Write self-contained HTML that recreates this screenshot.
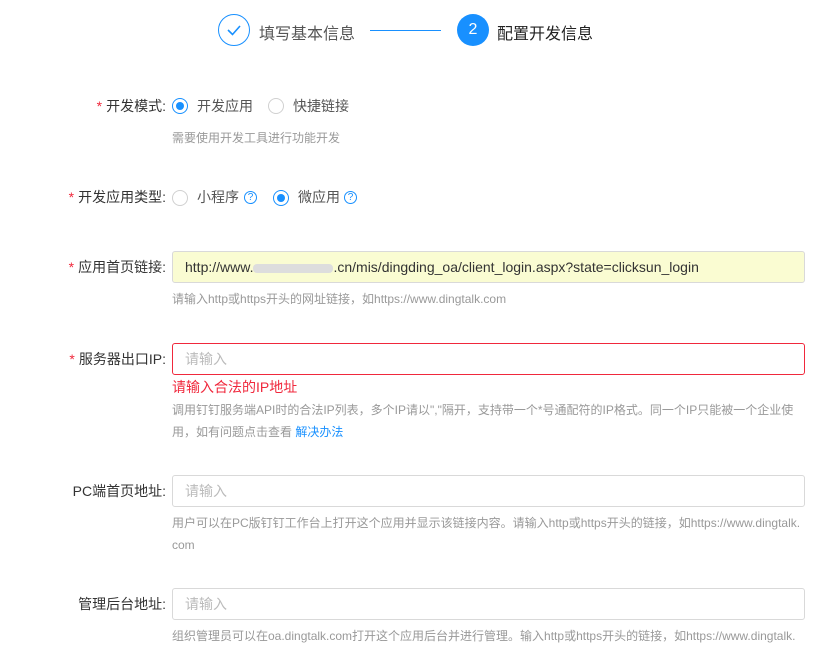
<!DOCTYPE html>
<html><head><meta charset="utf-8"><style>
*{margin:0;padding:0;box-sizing:border-box}
body{width:834px;height:648px;background:#fff;font-family:"Liberation Sans","Noto Sans CJK SC",sans-serif;color:#333;position:relative;overflow:hidden;font-size:14px}
.a{position:absolute;white-space:nowrap}
.lab{position:absolute;right:668px;font-size:14px;color:#333;white-space:nowrap;line-height:20px}
.lab b{color:#f0283c;font-weight:normal;margin-right:4px}
.inp{position:absolute;left:172px;width:633px;height:32px;border:1px solid #d9d9d9;border-radius:3px;padding-left:12px;line-height:30px;font-size:14px;color:#bbb}
.help{position:absolute;left:172px;font-size:12px;color:#999;line-height:22px;width:636px;word-break:break-all}
.r{position:absolute;width:16px;height:16px;border:1px solid #d0d0d0;border-radius:50%}
.r.on{border-color:#1890ff}
.r.on:after{content:"";position:absolute;left:3px;top:3px;width:8px;height:8px;border-radius:50%;background:#1890ff}
.q{position:absolute;width:13px;height:13px;border:1.2px solid #1890ff;border-radius:50%;color:#1890ff;font-size:10px;line-height:11px;text-align:center}
</style></head><body>
<div class="a" style="left:218px;top:14px;width:32px;height:32px;border:1px solid #1890ff;border-radius:50%"></div>
<svg class="a" style="left:218px;top:14px" width="32" height="32"><path d="M10 16 L14.5 20.5 L22 12" fill="none" stroke="#1890ff" stroke-width="1.6"/></svg>
<div class="a" style="left:259px;top:20px;font-size:16px;color:#555">填写基本信息</div>
<div class="a" style="left:370px;top:30px;width:71px;height:1px;background:#1890ff"></div>
<div class="a" style="left:457px;top:14px;width:32px;height:32px;border-radius:50%;background:#1890ff;color:#fff;text-align:center;line-height:32px;font-size:16px">2</div>
<div class="a" style="left:497px;top:20px;font-size:16px;color:#222">配置开发信息</div>

<div class="lab" style="top:96px"><b>*</b>开发模式:</div>
<div class="r on" style="left:172px;top:98px"></div><div class="a" style="left:197px;top:96px;line-height:20px;color:#555">开发应用</div>
<div class="r" style="left:268px;top:98px"></div><div class="a" style="left:293px;top:96px;line-height:20px;color:#555">快捷链接</div>
<div class="help" style="top:127px">需要使用开发工具进行功能开发</div>

<div class="lab" style="top:187px"><b>*</b>开发应用类型:</div>
<div class="r" style="left:172px;top:190px"></div><div class="a" style="left:197px;top:187px;line-height:20px;color:#555">小程序</div>
<div class="q" style="left:244px;top:191px">?</div>
<div class="r on" style="left:273px;top:190px"></div><div class="a" style="left:298px;top:187px;line-height:20px;color:#555">微应用</div>
<div class="q" style="left:344px;top:191px">?</div>

<div class="lab" style="top:257px"><b>*</b>应用首页链接:</div>
<div class="inp" style="top:251px;background:#fafcd2;color:#333">http://www.<span style="display:inline-block;width:80px;height:9px;background:#ddd;border-radius:4px;vertical-align:middle"></span>.cn/mis/dingding_oa/client_login.aspx?state=clicksun_login</div>
<div class="help" style="top:288px">请输入http或https开头的网址链接，如https://www.dingtalk.com</div>

<div class="lab" style="top:349px"><b>*</b>服务器出口IP:</div>
<div class="inp" style="top:343px;border-color:#f0283c">请输入</div>
<div class="a" style="left:172px;top:377px;font-size:14px;color:#f0283c;line-height:20px">请输入合法的IP地址</div>
<div class="help" style="top:399px">调用钉钉服务端API时的合法IP列表，多个IP请以","隔开，支持带一个*号通配符的IP格式。同一个IP只能被一个企业使用，如有问题点击查看 <span style="color:#1890ff">解决办法</span></div>

<div class="lab" style="top:481px">PC端首页地址:</div>
<div class="inp" style="top:475px">请输入</div>
<div class="help" style="top:512px;width:633px">用户可以在PC版钉钉工作台上打开这个应用并显示该链接内容。请输入http或https开头的链接，如https://www.dingtalk.<br>com</div>

<div class="lab" style="top:594px">管理后台地址:</div>
<div class="inp" style="top:588px">请输入</div>
<div class="help" style="top:625px">组织管理员可以在oa.dingtalk.com打开这个应用后台并进行管理。输入http或https开头的链接，如https://www.dingtalk.</div>
</body></html>
